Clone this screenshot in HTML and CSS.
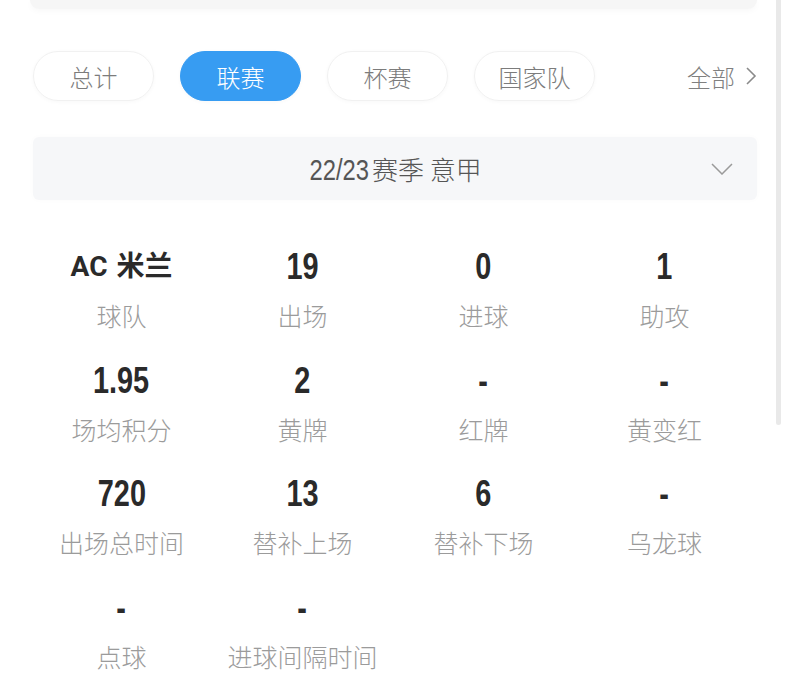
FILE: index.html
```html
<!DOCTYPE html>
<html lang="zh-CN">
<head>
<meta charset="UTF-8" />
<meta name="viewport" content="width=device-width, initial-scale=1" />
<title>球员数据 - 联赛</title>
<link rel="stylesheet" href="styles.css">
</head>
<body>
  <div class="page">
    <div class="top-card"></div>

    <div class="tabs">
      <div class="tab">总计</div>
      <div class="tab active">联赛</div>
      <div class="tab">杯赛</div>
      <div class="tab">国家队</div>
      <div class="tab-more">全部
        <svg width="12" height="20" viewBox="0 0 12 20"><path d="M2 2 L10 10 L2 18" fill="none" stroke="#8a8a8a" stroke-width="1.6"/></svg>
      </div>
    </div>

    <div class="season">
      <span class="season-text"><span class="num">22/23</span>赛季 意甲</span>
      <svg class="season-arrow" width="22" height="12" viewBox="0 0 22 12"><path d="M1 1 L11 11 L21 1" fill="none" stroke="#9a9a9a" stroke-width="1.5"/></svg>
    </div>

    <div class="stats">
      <div class="stat"><div class="value team">AC 米兰</div><div class="label">球队</div></div>
      <div class="stat"><div class="value"><span>19</span></div><div class="label">出场</div></div>
      <div class="stat"><div class="value"><span>0</span></div><div class="label">进球</div></div>
      <div class="stat"><div class="value"><span>1</span></div><div class="label">助攻</div></div>

      <div class="stat"><div class="value"><span>1.95</span></div><div class="label">场均积分</div></div>
      <div class="stat"><div class="value"><span>2</span></div><div class="label">黄牌</div></div>
      <div class="stat"><div class="value"><span>-</span></div><div class="label">红牌</div></div>
      <div class="stat"><div class="value"><span>-</span></div><div class="label">黄变红</div></div>

      <div class="stat"><div class="value"><span>720</span></div><div class="label">出场总时间</div></div>
      <div class="stat"><div class="value"><span>13</span></div><div class="label">替补上场</div></div>
      <div class="stat"><div class="value"><span>6</span></div><div class="label">替补下场</div></div>
      <div class="stat"><div class="value"><span>-</span></div><div class="label">乌龙球</div></div>

      <div class="stat"><div class="value"><span>-</span></div><div class="label">点球</div></div>
      <div class="stat"><div class="value"><span>-</span></div><div class="label">进球间隔时间</div></div>
    </div>
  </div>
  <div class="scrollbar"></div>
</body>
</html>
```

FILE: styles.css
```css
* {
  box-sizing: border-box;
}
body {
  margin: 0;
  background: #fff;
  font-family: "Noto Sans CJK SC", "Noto Sans", sans-serif;
  font-weight: 300;
  color: #333;
  overflow: hidden;
}
.page {
  width: 788px;
  padding: 0 31px;
}

/* bottom edge of the card above */
.top-card {
  height: 9px;
  margin: 0 0 0 -1px;
  background: #f6f6f6;
  border-radius: 0 0 10px 10px;
  box-shadow: 0 2px 6px rgb(0 0 0 / 0.03);
}

/* competition tabs */
.tabs {
  display: flex;
  align-items: center;
  gap: 26px;
  margin-top: 42px;
  padding-left: 2px;
}
.tab {
  width: 121px;
  height: 50px;
  border-radius: 25px;
  border: 1px solid #f1f1f1;
  box-shadow: 0 1px 4px rgb(0 0 0 / 0.03);
  display: flex;
  align-items: center;
  justify-content: center;
  font-size: 24px;
  color: #7c7c7c;
}
.tab.active {
  background: #379cf2;
  border-color: #379cf2;
  color: #fff;
}
.tab-more {
  margin-left: auto;
  display: flex;
  align-items: center;
  gap: 10px;
  font-size: 24px;
  color: #808080;
}

/* season picker */
.season {
  margin: 36px 0 0 2px;
  height: 63px;
  background: #f6f7f9;
  border-radius: 6px;
  box-shadow: 0 0 6px rgb(0 0 0 / 0.02);
  display: flex;
  align-items: center;
  justify-content: center;
  position: relative;
}
.season-text {
  font-size: 26px;
  color: #555;
}
.season-text .num {
  display: inline-block;
  font-family: "Liberation Sans", sans-serif;
  font-weight: 400;
  font-size: 29px;
  transform: scaleX(0.82);
  margin: 0 -4px 0 -5px;
}
.season-arrow {
  position: absolute;
  right: 24px;
  top: 26px;
}

/* stats grid */
.stats {
  display: grid;
  grid-template-columns: repeat(4, 181px);
  row-gap: 28.5px;
  margin-top: 47px;
}
.stat {
  display: flex;
  flex-direction: column;
  align-items: center;
}
.value {
  height: 40px;
  line-height: 40px;
  font-family: "Liberation Sans", sans-serif;
  font-weight: 700;
  font-size: 37px;
  color: #2a2a2a;
}
/* numbers are drawn narrow, like a condensed face */
.value span {
  display: inline-block;
  transform: scaleX(0.78);
}
.value.team {
  font-family: Roboto, "Noto Sans CJK SC", sans-serif;
  font-size: 28px;
  font-weight: 700;
  word-spacing: 2px;
}
.label {
  margin-top: 11px;
  line-height: 34px;
  font-size: 25px;
  color: #9b9b9b;
}

.scrollbar {
  position: absolute;
  top: 0;
  left: 776px;
  width: 5px;
  height: 425px;
  background: #e9e9e9;
  border-radius: 0 0 3px 3px;
}
```
